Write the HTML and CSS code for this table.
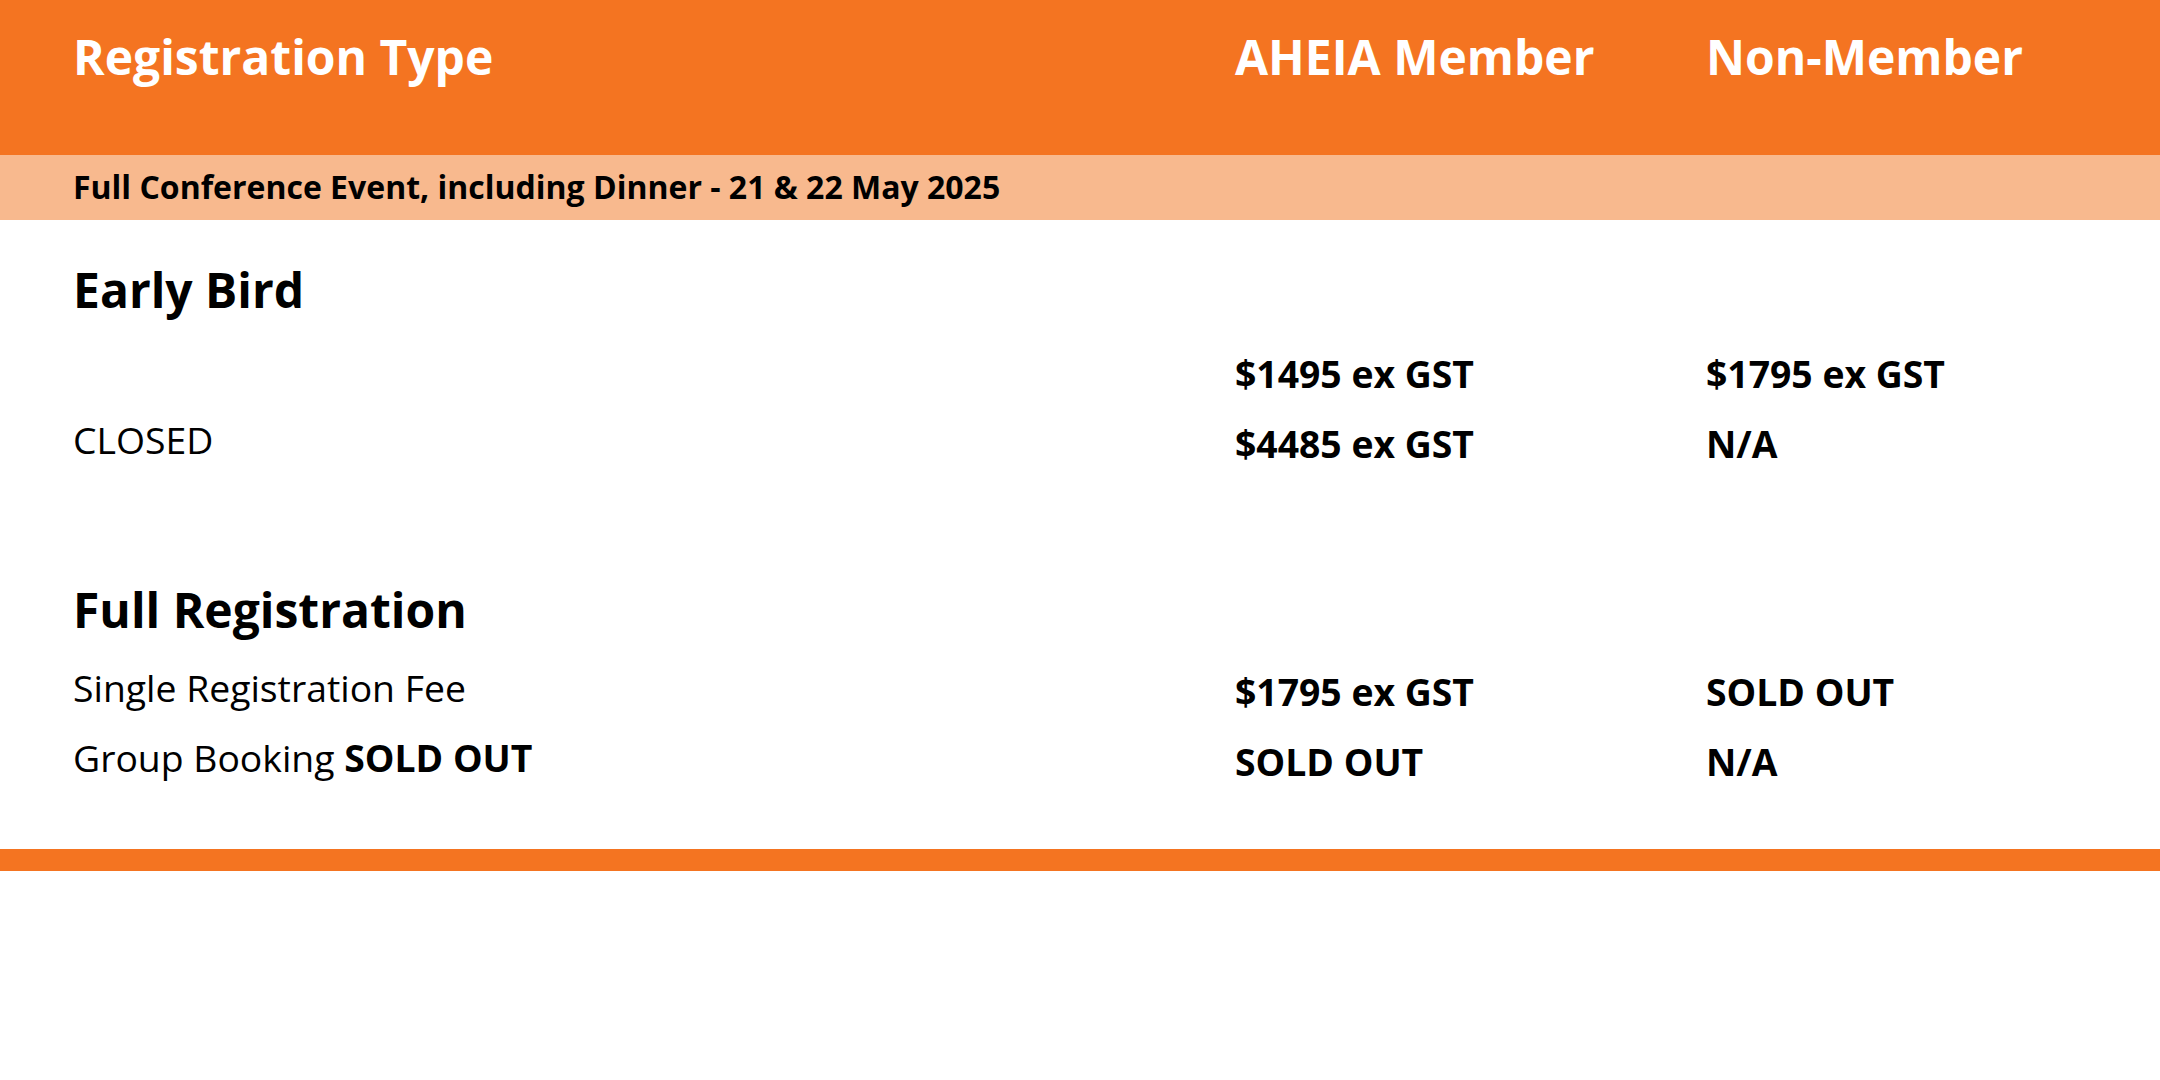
FILE: index.html
```html
<!DOCTYPE html>
<html lang="en">
<head>
<meta charset="utf-8">
<title>Registration</title>
<link rel="stylesheet" href="styles.css">
</head>
<body>
<div class="page">
  <header class="head grid">
    <div class="hcell">Registration Type</div>
    <div class="hcell">AHEIA Member</div>
    <div class="hcell">Non-Member</div>
  </header>
  <div class="band">Full Conference Event, including Dinner - 21 &amp; 22 May 2025</div>

  <section class="section first">
    <h2 class="title">Early Bird</h2>
    <div class="grid rows">
      <div class="label"></div>
      <div class="price">$1495 ex GST</div>
      <div class="price">$1795 ex GST</div>
      <div class="label">CLOSED</div>
      <div class="price">$4485 ex GST</div>
      <div class="price">N/A</div>
    </div>
  </section>

  <section class="section second">
    <h2 class="title">Full Registration</h2>
    <div class="grid rows">
      <div class="label">Single Registration Fee</div>
      <div class="price">$1795 ex GST</div>
      <div class="price">SOLD OUT</div>
      <div class="label">Group Booking <b>SOLD OUT</b></div>
      <div class="price">SOLD OUT</div>
      <div class="price">N/A</div>
    </div>
  </section>

  <div class="bar"></div>
</div>
</body>
</html>
```
FILE: styles.css
```css
html, body {
  margin: 0;
  padding: 0;
  background: #ffffff;
}
body {
  font-family: "Open Sans", "Noto Sans", "Liberation Sans", sans-serif;
  color: #000000;
}
.page {
  width: 2160px;
}
.grid {
  display: grid;
  grid-template-columns: 1162px 471px 1fr;
  padding-left: 73px;
}
.head {
  background: #f47421;
  height: 155px;
  box-sizing: border-box;
  padding-top: 24px;
  align-items: start;
}
.hcell {
  color: #ffffff;
  font-size: 48px;
  font-weight: 700;
  line-height: normal;
}
.band {
  background: #f8b98e;
  height: 65px;
  box-sizing: border-box;
  padding: 10px 0 0 73px;
  font-size: 32px;
  font-weight: 700;
  line-height: normal;
}
.section.first {
  padding-top: 37px;
}
.section.second {
  padding-top: 98px;
}
.title {
  margin: 0;
  padding-left: 73px;
  font-size: 48px;
  font-weight: 700;
  line-height: normal;
}
.first .rows {
  margin-top: 17px;
}
.second .rows {
  margin-top: 15px;
}
.rows {
  align-items: start;
}
.price {
  font-size: 37.33px;
  font-weight: 700;
  line-height: 70px;
  height: 70px;
}
.label {
  font-size: 37.33px;
  font-weight: 400;
  line-height: 62px;
  height: 70px;
}
.label b {
  font-weight: 700;
}
.bar {
  margin-top: 52px;
  height: 22px;
  background: #f47421;
}
```
